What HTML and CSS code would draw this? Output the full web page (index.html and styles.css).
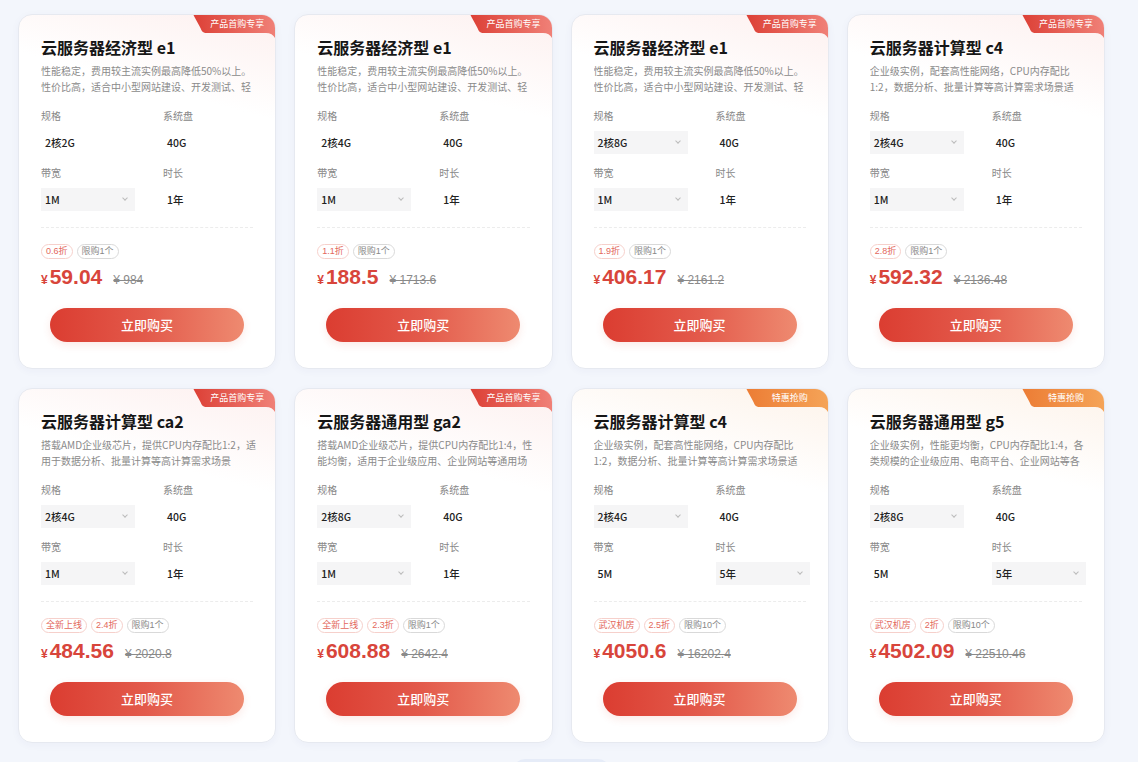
FILE: index.html
```html
<!DOCTYPE html>
<html lang="zh-CN">
<head>
    <meta charset="UTF-8">
    <title>云服务器</title>
    <link rel="stylesheet" href="styles.css">
</head>
<body>
<div id="wrap">
    <ul class="list">
        <li class="card">
            <svg class="badge-bg" viewBox="0 0 84 28"><path d="M0 0H84V28C84 23 80 19 74 19H15C11 19 9.5 17 8.5 14L2.5 3C1.8 1.2 1 0 0 0Z" fill="url(#gr)"/></svg>
            <span class="badge">产品首购专享</span>
            <h3>云服务器经济型 e1</h3>
            <p class="desc">性能稳定，费用较主流实例最高降低50%以上。性价比高，适合中小型网站建设、开发测试、轻量级应用等场景</p>
            <div class="form">
                <div><label>规格</label><div class="val">2核2G</div></div>
                <div><label>系统盘</label><div class="val">40G</div></div>
                <div><label>带宽</label><div class="val sel">1M<i></i></div></div>
                <div><label>时长</label><div class="val">1年</div></div>
            </div>
            <div class="tags"><span class="red">0.6折</span><span>限购1个</span></div>
            <div class="price"><em>¥</em><b>59.04</b><s>¥ 984</s></div>
            <a class="buy">立即购买</a>
        </li>
        <li class="card">
            <svg class="badge-bg" viewBox="0 0 84 28"><path d="M0 0H84V28C84 23 80 19 74 19H15C11 19 9.5 17 8.5 14L2.5 3C1.8 1.2 1 0 0 0Z" fill="url(#gr)"/></svg>
            <span class="badge">产品首购专享</span>
            <h3>云服务器经济型 e1</h3>
            <p class="desc">性能稳定，费用较主流实例最高降低50%以上。性价比高，适合中小型网站建设、开发测试、轻量级应用等场景</p>
            <div class="form">
                <div><label>规格</label><div class="val">2核4G</div></div>
                <div><label>系统盘</label><div class="val">40G</div></div>
                <div><label>带宽</label><div class="val sel">1M<i></i></div></div>
                <div><label>时长</label><div class="val">1年</div></div>
            </div>
            <div class="tags"><span class="red">1.1折</span><span>限购1个</span></div>
            <div class="price"><em>¥</em><b>188.5</b><s>¥ 1713.6</s></div>
            <a class="buy">立即购买</a>
        </li>
        <li class="card">
            <svg class="badge-bg" viewBox="0 0 84 28"><path d="M0 0H84V28C84 23 80 19 74 19H15C11 19 9.5 17 8.5 14L2.5 3C1.8 1.2 1 0 0 0Z" fill="url(#gr)"/></svg>
            <span class="badge">产品首购专享</span>
            <h3>云服务器经济型 e1</h3>
            <p class="desc">性能稳定，费用较主流实例最高降低50%以上。性价比高，适合中小型网站建设、开发测试、轻量级应用等场景</p>
            <div class="form">
                <div><label>规格</label><div class="val sel">2核8G<i></i></div></div>
                <div><label>系统盘</label><div class="val">40G</div></div>
                <div><label>带宽</label><div class="val sel">1M<i></i></div></div>
                <div><label>时长</label><div class="val">1年</div></div>
            </div>
            <div class="tags"><span class="red">1.9折</span><span>限购1个</span></div>
            <div class="price"><em>¥</em><b>406.17</b><s>¥ 2161.2</s></div>
            <a class="buy">立即购买</a>
        </li>
        <li class="card">
            <svg class="badge-bg" viewBox="0 0 84 28"><path d="M0 0H84V28C84 23 80 19 74 19H15C11 19 9.5 17 8.5 14L2.5 3C1.8 1.2 1 0 0 0Z" fill="url(#gr)"/></svg>
            <span class="badge">产品首购专享</span>
            <h3>云服务器计算型 c4</h3>
            <p class="desc">企业级实例，配套高性能网络，CPU内存配比1:2，数据分析、批量计算等高计算需求场景适用。</p>
            <div class="form">
                <div><label>规格</label><div class="val sel">2核4G<i></i></div></div>
                <div><label>系统盘</label><div class="val">40G</div></div>
                <div><label>带宽</label><div class="val sel">1M<i></i></div></div>
                <div><label>时长</label><div class="val">1年</div></div>
            </div>
            <div class="tags"><span class="red">2.8折</span><span>限购1个</span></div>
            <div class="price"><em>¥</em><b>592.32</b><s>¥ 2136.48</s></div>
            <a class="buy">立即购买</a>
        </li>
        <li class="card">
            <svg class="badge-bg" viewBox="0 0 84 28"><path d="M0 0H84V28C84 23 80 19 74 19H15C11 19 9.5 17 8.5 14L2.5 3C1.8 1.2 1 0 0 0Z" fill="url(#gr)"/></svg>
            <span class="badge">产品首购专享</span>
            <h3>云服务器计算型 ca2</h3>
            <p class="desc">搭载AMD企业级芯片，提供CPU内存配比1:2，适用于数据分析、批量计算等高计算需求场景</p>
            <div class="form">
                <div><label>规格</label><div class="val sel">2核4G<i></i></div></div>
                <div><label>系统盘</label><div class="val">40G</div></div>
                <div><label>带宽</label><div class="val sel">1M<i></i></div></div>
                <div><label>时长</label><div class="val">1年</div></div>
            </div>
            <div class="tags"><span class="red">全新上线</span><span class="red">2.4折</span><span>限购1个</span></div>
            <div class="price"><em>¥</em><b>484.56</b><s>¥ 2020.8</s></div>
            <a class="buy">立即购买</a>
        </li>
        <li class="card">
            <svg class="badge-bg" viewBox="0 0 84 28"><path d="M0 0H84V28C84 23 80 19 74 19H15C11 19 9.5 17 8.5 14L2.5 3C1.8 1.2 1 0 0 0Z" fill="url(#gr)"/></svg>
            <span class="badge">产品首购专享</span>
            <h3>云服务器通用型 ga2</h3>
            <p class="desc">搭载AMD企业级芯片，提供CPU内存配比1:4，性能均衡，适用于企业级应用、企业网站等通用场景</p>
            <div class="form">
                <div><label>规格</label><div class="val sel">2核8G<i></i></div></div>
                <div><label>系统盘</label><div class="val">40G</div></div>
                <div><label>带宽</label><div class="val sel">1M<i></i></div></div>
                <div><label>时长</label><div class="val">1年</div></div>
            </div>
            <div class="tags"><span class="red">全新上线</span><span class="red">2.3折</span><span>限购1个</span></div>
            <div class="price"><em>¥</em><b>608.88</b><s>¥ 2642.4</s></div>
            <a class="buy">立即购买</a>
        </li>
        <li class="card orange">
            <svg class="badge-bg" viewBox="0 0 84 28"><path d="M0 0H84V28C84 23 80 19 74 19H15C11 19 9.5 17 8.5 14L2.5 3C1.8 1.2 1 0 0 0Z" fill="url(#go)"/></svg>
            <span class="badge">特惠抢购</span>
            <h3>云服务器计算型 c4</h3>
            <p class="desc">企业级实例，配套高性能网络，CPU内存配比1:2，数据分析、批量计算等高计算需求场景适用。</p>
            <div class="form">
                <div><label>规格</label><div class="val sel">2核4G<i></i></div></div>
                <div><label>系统盘</label><div class="val">40G</div></div>
                <div><label>带宽</label><div class="val">5M</div></div>
                <div><label>时长</label><div class="val sel">5年<i></i></div></div>
            </div>
            <div class="tags"><span class="red">武汉机房</span><span class="red">2.5折</span><span>限购10个</span></div>
            <div class="price"><em>¥</em><b>4050.6</b><s>¥ 16202.4</s></div>
            <a class="buy">立即购买</a>
        </li>
        <li class="card orange">
            <svg class="badge-bg" viewBox="0 0 84 28"><path d="M0 0H84V28C84 23 80 19 74 19H15C11 19 9.5 17 8.5 14L2.5 3C1.8 1.2 1 0 0 0Z" fill="url(#go)"/></svg>
            <span class="badge">特惠抢购</span>
            <h3>云服务器通用型 g5</h3>
            <p class="desc">企业级实例，性能更均衡，CPU内存配比1:4，各类规模的企业级应用、电商平台、企业网站等各种场景</p>
            <div class="form">
                <div><label>规格</label><div class="val sel">2核8G<i></i></div></div>
                <div><label>系统盘</label><div class="val">40G</div></div>
                <div><label>带宽</label><div class="val">5M</div></div>
                <div><label>时长</label><div class="val sel">5年<i></i></div></div>
            </div>
            <div class="tags"><span class="red">武汉机房</span><span class="red">2折</span><span>限购10个</span></div>
            <div class="price"><em>¥</em><b>4502.09</b><s>¥ 22510.46</s></div>
            <a class="buy">立即购买</a>
        </li>
    </ul>
    <div class="more"></div>
</div>
<!--渐变定义-->
<svg class="defs" width="0" height="0">
    <defs>
        <linearGradient id="gr" x1="0" y1="0" x2="1" y2="0">
            <stop offset="0" stop-color="#dc3f35"/>
            <stop offset="1" stop-color="#f08178"/>
        </linearGradient>
        <linearGradient id="go" x1="0" y1="0" x2="1" y2="0">
            <stop offset="0" stop-color="#ec7c34"/>
            <stop offset="1" stop-color="#f5a458"/>
        </linearGradient>
    </defs>
</svg>
</body>
</html>
```

FILE: styles.css
```css
*{margin: 0;padding: 0;box-sizing: border-box;}
li{list-style: none;}
html,body{background: #f3f6fc;}
body{font-family: "Liberation Sans", "Noto Sans CJK SC", sans-serif;color: #222;overflow: hidden;height: 762px;}
#wrap{width: 1087px;margin-left: 18px;padding-top: 14px;}
.list{display: grid;grid-template-columns: repeat(4, 1fr);column-gap: 18px;row-gap: 19px;}
.defs{position: absolute;}

/*卡片*/
.card{position: relative;height: 355px;padding: 22px 22px 0;border: 1px solid #e6e9f0;border-radius: 14px;overflow: hidden;
    background: linear-gradient(195deg, #fdf0ef 0, #fff 25%, #fff 100%);
    box-shadow: 0 2px 8px rgba(40,60,120,.04);
}
.card.orange{background: linear-gradient(195deg, #fdf3ea 0, #fff 25%, #fff 100%);}
.badge-bg{position: absolute;top: -1px;right: -1px;width: 84px;height: 28px;}
.badge{position: absolute;top: 2px;right: 8px;width: 60px;text-align: center;font-size: 9px;line-height: 14px;color: #fff;}
.card h3{font-size: 16px;line-height: 20px;font-weight: 600;color: #161616;font-family: "Noto Sans CJK SC", sans-serif;}
.desc{margin: 6px -4px 0 0;height: 32px;overflow: hidden;font-size: 10px;line-height: 16px;color: #8a8a8a;font-family: "Noto Sans CJK SC", sans-serif;}

.form{display: grid;grid-template-columns: 1fr 1fr;column-gap: 28px;row-gap: 12px;margin-top: 14px;}
.form label{display: block;font-size: 10px;line-height: 16px;color: #888;margin-bottom: 6px;}
.val{position: relative;width: 94px;height: 23px;padding-left: 4px;font-size: 10.5px;line-height: 23px;color: #222;font-weight: 500;font-family: "Noto Sans CJK SC", sans-serif;}
.val.sel{background: #f5f5f6;}
.val i{position: absolute;right: 8px;top: 8px;width: 4px;height: 4px;border-right: 1px solid #bbb;border-bottom: 1px solid #bbb;transform: rotate(45deg);}

.tags{display: flex;gap: 4px;margin-top: 16px;padding-top: 16px;border-top: 1px dashed #ececec;}
.tags span{height: 15px;padding: 0 4px;border: 1px solid #d9d9d9;border-radius: 8px;font-size: 9px;line-height: 13px;color: #888;}
.tags .red{border-color: #f6d0cb;color: #e3685c;}

.price{display: flex;align-items: baseline;margin-top: 6px;height: 24px;color: #d8453b;}
.price em{font-style: normal;font-size: 12px;font-weight: 700;margin-right: 2px;}
.price b{font-size: 21px;font-weight: 700;}
.price s{margin-left: 11px;font-size: 12px;color: #8a8a8a;}

.buy{display: block;width: 194px;height: 34px;margin: 19px auto 0;border-radius: 17px;
    background: linear-gradient(90deg, #db3d31 0, #e35a4b 50%, #ee8a70 100%);
    color: #fff;font-size: 13px;line-height: 34px;text-align: center;font-weight: 500;cursor: pointer;
    font-family: "Noto Sans CJK SC", sans-serif;
    box-shadow: 0 3px 8px rgba(220,70,50,.12);
}

.more{width: 97px;height: 30px;margin: 16px auto 0;border-radius: 12px;background: #e6ecf8;}
```
